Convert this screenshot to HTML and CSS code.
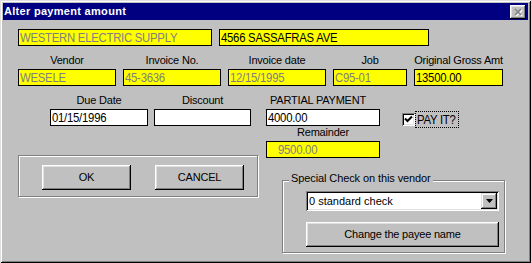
FILE: index.html
```html
<!DOCTYPE html>
<html>
<head>
<meta charset="utf-8">
<link rel="stylesheet" href="styles.css">
</head>
<body>
<div class="window">
  <div class="titlebar">
    <span class="title">Alter payment amount</span>
    <span class="close">
      <svg width="16" height="14" viewBox="0 0 16 14">
        <path d="M5 4 L11 10 M11 4 L5 10" stroke="#ffffff" stroke-width="1.6" transform="translate(1 1)"/>
        <path d="M5 4 L11 10 M11 4 L5 10" stroke="#808080" stroke-width="1.6"/>
      </svg>
    </span>
  </div>
  <div class="body">
    <div class="row-addr">
      <div class="field yellow dim w-name"><span class="fit">WESTERN ELECTRIC SUPPLY</span></div>
      <div class="field yellow w-addr"><span class="fit">4566 SASSAFRAS AVE</span></div>
    </div>
    <div class="info-grid">
      <div class="lbl">Vendor</div>
      <div class="lbl">Invoice No.</div>
      <div class="lbl">Invoice date</div>
      <div class="lbl">Job</div>
      <div class="lbl">Original Gross Amt</div>
      <div class="field yellow dim"><span class="fit">WESELE</span></div>
      <div class="field yellow dim"><span class="fit">45-3636</span></div>
      <div class="field yellow dim"><span class="fit">12/15/1995</span></div>
      <div class="field yellow dim"><span class="fit">C95-01</span></div>
      <div class="field yellow"><span class="fit">13500.00</span></div>
    </div>
    <div class="lower">
      <div class="col-left">
        <div class="dates">
          <div class="date-col w-due">
            <div class="lbl">Due Date</div>
            <div class="field white"><span class="fit">01/15/1996</span></div>
          </div>
          <div class="date-col w-disc">
            <div class="lbl">Discount</div>
            <div class="field white"></div>
          </div>
        </div>
        <div class="group group-buttons">
          <div class="btn btn-dlg">OK</div>
          <div class="btn btn-dlg">CANCEL</div>
        </div>
      </div>
      <div class="col-right">
        <div class="pay-row">
          <div class="pay-col">
            <div class="lbl lbl-left">PARTIAL PAYMENT</div>
            <div class="field white"><span class="fit">4000.00</span></div>
            <div class="lbl">Remainder</div>
            <div class="field yellow dim remainder"><span class="fit">9500.00</span></div>
          </div>
          <div class="check">
            <span class="checkbox">
              <svg width="9" height="9" viewBox="0 0 9 9">
                <path d="M1 3.5 L3.5 6 L8 1.5" fill="none" stroke="#000" stroke-width="2"/>
              </svg>
            </span>
            <span class="check-label"><span class="fit">PAY IT?</span></span>
          </div>
        </div>
        <div class="group group-special">
          <span class="legend">Special Check on this vendor</span>
          <div class="select">
            <span class="select-text">0 standard check</span>
            <span class="select-btn">
              <svg width="7" height="4" viewBox="0 0 7 4"><path d="M0 0 H7 L3.5 4 Z" fill="#000"/></svg>
            </span>
          </div>
          <div class="btn btn-wide">Change the payee name</div>
        </div>
      </div>
    </div>
  </div>
</div>
</body>
</html>
```
FILE: styles.css
```css
html, body {
  margin: 0;
  padding: 0;
  background: #c0c0c0;
}

.window {
  width: 531px;
  height: 263px;
  box-sizing: border-box;
  padding: 3px;
  background: #c0c0c0;
  box-shadow: inset 1px 1px #dfdfdf, inset -1px -1px #000, inset 2px 2px #fff, inset -2px -2px #808080;
  font-family: "Liberation Sans", Arial, sans-serif;
  font-size: 11px;
  letter-spacing: -0.2px;
  color: #000;
}

.titlebar {
  height: 17px;
  background: #000080;
  display: flex;
  align-items: center;
  justify-content: space-between;
  padding: 0 2px 0 1px;
}

.title {
  color: #fff;
  font-weight: bold;
  font-size: 11px;
  letter-spacing: 0.3px;
  line-height: 17px;
}

.close {
  width: 16px;
  height: 14px;
  background: #c0c0c0;
  box-shadow: inset -1px -1px #000, inset 1px 1px #fff, inset -2px -2px #808080, inset 2px 2px #dfdfdf;
  display: block;
}

.close svg {
  display: block;
}

.body {
  padding-left: 15px;
}

.field {
  height: 17px;
  box-sizing: border-box;
  border: 1px solid #000;
  font-size: 13.5px;
  line-height: 15px;
  padding: 0 1px;
  letter-spacing: -0.3px;
  white-space: nowrap;
  overflow: hidden;
}

.fit {
  display: inline-block;
  transform: scaleX(0.84);
  transform-origin: left center;
}

.yellow {
  background: #ffff00;
}

.white {
  background: #fff;
}

.dim {
  color: #808080;
}

.row-addr {
  margin-top: 9px;
  display: flex;
  gap: 7px;
}

.w-name {
  width: 194px;
}

.w-addr {
  width: 210px;
}

.info-grid {
  margin-top: 8px;
  display: grid;
  grid-template-columns: 98px 98px 98px 74px 89px;
  column-gap: 7px;
  row-gap: 2px;
}

.lbl {
  line-height: 13px;
  height: 13px;
  text-align: center;
  white-space: nowrap;
}

.lbl-left {
  text-align: left;
  padding-left: 4px;
}

.lower {
  margin-top: 8px;
  display: flex;
  gap: 8px;
}

.col-left {
  width: 240px;
}

.dates {
  display: flex;
  gap: 6px;
  padding-left: 32px;
}

.date-col {
  display: flex;
  flex-direction: column;
  gap: 2px;
}

.w-due {
  width: 98px;
}

.w-disc {
  width: 97px;
}

.group {
  box-sizing: border-box;
  border: 1px solid #808080;
  box-shadow: inset 1px 1px #fff, 1px 1px #fff;
}

.group-buttons {
  margin-top: 29px;
  width: 240px;
  padding: 9px 0 6px 23px;
  display: flex;
  gap: 24px;
}

.btn {
  height: 25px;
  box-sizing: border-box;
  background: #c0c0c0;
  box-shadow: inset -1px -1px #000, inset 1px 1px #fff, inset -2px -2px #808080, inset 2px 2px #dfdfdf;
  display: flex;
  align-items: center;
  justify-content: center;
  line-height: 13px;
}

.btn-dlg {
  width: 89px;
}

.col-right {
  width: 239px;
}

.pay-row {
  display: flex;
  align-items: flex-start;
}

.pay-col {
  width: 114px;
  display: flex;
  flex-direction: column;
}

.pay-col .field.white {
  margin-top: 2px;
}

.remainder {
  margin-top: 2px;
  padding-left: 11px;
}

.check {
  margin-left: 22px;
  margin-top: 17px;
  display: flex;
  align-items: center;
}

.checkbox {
  width: 13px;
  height: 13px;
  box-sizing: border-box;
  background: #fff;
  box-shadow: inset 1px 1px #808080, inset -1px -1px #fff, inset 2px 2px #000, inset -2px -2px #dfdfdf;
  display: flex;
  align-items: center;
  justify-content: center;
}

.checkbox svg {
  display: block;
}

.check-label {
  width: 44px;
  height: 17px;
  box-sizing: border-box;
  border: 1px dotted #000;
  font-size: 13.5px;
  line-height: 15px;
  letter-spacing: -0.3px;
  padding-left: 1px;
  white-space: nowrap;
}

.group-special {
  margin-top: 22px;
  margin-left: 16px;
  width: 223px;
  height: 73px;
  padding: 0 0 0 23px;
  display: flex;
  flex-direction: column;
  align-items: flex-start;
}

.legend {
  margin-top: -9px;
  margin-left: -17px;
  padding: 0 2px;
  background: #c0c0c0;
  line-height: 13px;
  height: 13px;
  white-space: nowrap;
  letter-spacing: -0.1px;
}

.select {
  margin-top: 6px;
  width: 193px;
  height: 20px;
  box-sizing: border-box;
  background: #fff;
  box-shadow: inset 1px 1px #808080, inset -1px -1px #fff, inset 2px 2px #000, inset -2px -2px #dfdfdf;
  display: flex;
  align-items: center;
  justify-content: space-between;
  padding: 2px;
}

.select-text {
  padding-left: 1px;
  letter-spacing: 0;
  line-height: 13px;
}

.select-btn {
  width: 16px;
  height: 16px;
  box-sizing: border-box;
  background: #c0c0c0;
  box-shadow: inset -1px -1px #000, inset 1px 1px #dfdfdf, inset -2px -2px #808080, inset 2px 2px #fff;
  display: flex;
  align-items: center;
  justify-content: center;
}

.select-btn svg {
  display: block;
}

.btn-wide {
  margin-top: 11px;
  width: 193px;
}
```
